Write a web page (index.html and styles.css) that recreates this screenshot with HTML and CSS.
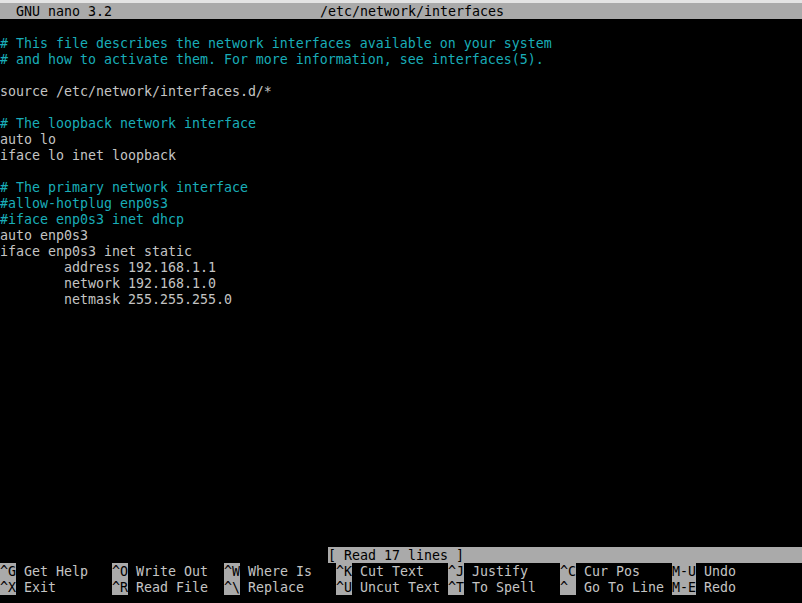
FILE: index.html
```html
<!DOCTYPE html>
<html lang="en">
<head>
    <meta charset="UTF-8">
    <title>GNU nano 3.2 - /etc/network/interfaces</title>
    <link rel="stylesheet" href="styles.css">
</head>
<body>
    <div class="terminal">
        <div class="titlebar"><span class="app">  GNU nano 3.2</span><span class="filename">/etc/network/interfaces</span></div>

        <div class="buffer">
            <div class="line"> </div>
            <div class="line comment"># This file describes the network interfaces available on your system</div>
            <div class="line comment"># and how to activate them. For more information, see interfaces(5).</div>
            <div class="line"> </div>
            <div class="line">source /etc/network/interfaces.d/*</div>
            <div class="line"> </div>
            <div class="line comment"># The loopback network interface</div>
            <div class="line">auto lo</div>
            <div class="line">iface lo inet loopback</div>
            <div class="line"> </div>
            <div class="line comment"># The primary network interface</div>
            <div class="line comment">#allow-hotplug enp0s3</div>
            <div class="line comment">#iface enp0s3 inet dhcp</div>
            <div class="line">auto enp0s3</div>
            <div class="line">iface enp0s3 inet static</div>
            <div class="line">        address 192.168.1.1</div>
            <div class="line">        network 192.168.1.0</div>
            <div class="line">        netmask 255.255.255.0</div>
        </div>

        <div class="statusbar"><span class="cell status">[ Read 17 lines ]</span></div>

        <div class="shortcuts">
            <div class="shortcut"><span class="cell key">^G</span><span class="cell"> Get Help</span></div>
            <div class="shortcut"><span class="cell key">^O</span><span class="cell"> Write Out</span></div>
            <div class="shortcut"><span class="cell key">^W</span><span class="cell"> Where Is</span></div>
            <div class="shortcut"><span class="cell key">^K</span><span class="cell"> Cut Text</span></div>
            <div class="shortcut"><span class="cell key">^J</span><span class="cell"> Justify</span></div>
            <div class="shortcut"><span class="cell key">^C</span><span class="cell"> Cur Pos</span></div>
            <div class="shortcut"><span class="cell key">M-U</span><span class="cell"> Undo</span></div>
            <div class="shortcut"><span class="cell key">^X</span><span class="cell"> Exit</span></div>
            <div class="shortcut"><span class="cell key">^R</span><span class="cell"> Read File</span></div>
            <div class="shortcut"><span class="cell key">^\</span><span class="cell"> Replace</span></div>
            <div class="shortcut"><span class="cell key">^U</span><span class="cell"> Uncut Text</span></div>
            <div class="shortcut"><span class="cell key">^T</span><span class="cell"> To Spell</span></div>
            <div class="shortcut"><span class="cell key">^_</span><span class="cell"> Go To Line</span></div>
            <div class="shortcut"><span class="cell key">M-E</span><span class="cell"> Redo</span></div>
        </div>
    </div>
</body>
</html>
```

FILE: styles.css
```css
html, body {
    margin: 0;
    height: 100%;
    background-color: #000;
}

body {
    font-family: 'DejaVu Sans Mono', 'Liberation Mono', monospace;
    font-size: 13.29px;
    line-height: 16px;
    color: #c4c4c4;
    overflow: hidden;
}

.terminal {
    height: 600px;
    border-top: 3px solid #e4e4e4;
    display: flex;
    flex-direction: column;
}

.titlebar {
    background-color: #aaaaaa;
    color: #000;
    height: 15px;
    padding-top: 1px;
    display: flex;
    white-space: pre;
}

.titlebar .app {
    width: 320px;
}

.buffer {
    flex: 1;
}

/* one terminal row = 16px, glyphs sit 1px low like the console font */
.line {
    height: 15px;
    padding-top: 1px;
    white-space: pre;
}

.comment {
    color: #19adb8;
}

.statusbar {
    height: 16px;
    padding-left: 328px;
}

.shortcuts {
    display: grid;
    grid-template-columns: repeat(7, 112px);
    grid-auto-rows: 16px;
    margin-bottom: 8px;
}

.shortcut {
    display: flex;
    height: 16px;
}

.cell {
    display: block;
    height: 16px;
    box-sizing: border-box;
    padding-top: 1px;
    line-height: 15px;
    white-space: pre;
}

.status,
.key {
    background-color: #aaaaaa;
    color: #000;
}
```
